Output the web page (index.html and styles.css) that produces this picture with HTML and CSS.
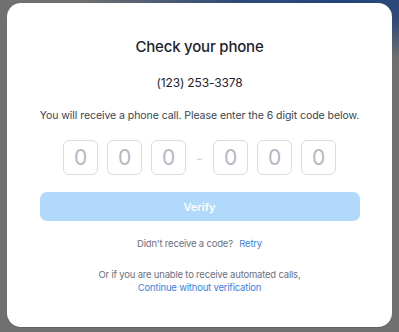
FILE: index.html
```html
<!DOCTYPE html>
<html>
<head>
<meta charset="utf-8">
<link rel="stylesheet" href="styles.css">
</head>
<body>
<div class="card">
  <h1 class="title">Check your phone</h1>
  <p class="phone">(123) 253-3378</p>
  <p class="desc">You will receive a phone call. Please enter the 6 digit code below.</p>
  <div class="code">
    <div class="box">0</div>
    <div class="box">0</div>
    <div class="box">0</div>
    <div class="dash">-</div>
    <div class="box">0</div>
    <div class="box">0</div>
    <div class="box">0</div>
  </div>
  <button class="verify">Verify</button>
  <p class="retry">Didn't receive a code? <a class="link">Retry</a></p>
  <p class="alt">Or if you are unable to receive automated calls,<br><a class="link">Continue without verification</a></p>
</div>
</body>
</html>
```
FILE: styles.css
```css
html, body {
  margin: 0;
  height: 100%;
}
body {
  background: radial-gradient(ellipse 260px 60px at 340px 0, #23457c 0%, #2f4a78 40%, rgba(112,112,112,0) 100%), #707070;
  padding: 3px 7px 5px 7px;
  box-sizing: border-box;
  font-family: "Inter", "Liberation Sans", sans-serif;
}
.card {
  background: #fff;
  border-radius: 14px;
  height: 324px;
  box-sizing: border-box;
  padding-top: 34px;
  display: flex;
  flex-direction: column;
  align-items: center;
  box-shadow: 0 1px 1px rgba(0,0,0,0.15);
}
.title {
  margin: 0;
  font-size: 15px;
  line-height: 20px;
  letter-spacing: -0.2px;
  font-weight: 500;
  color: #1b1f2e;
}
.phone {
  margin: 18px 0 0;
  font-size: 12px;
  line-height: 16px;
  letter-spacing: -0.15px;
  color: #1f2330;
}
.desc {
  margin: 18px 0 0;
  font-size: 10.5px;
  line-height: 14px;
  letter-spacing: -0.06px;
  color: #3a3f4c;
}
.code {
  margin-top: 17px;
  display: flex;
  align-items: center;
  gap: 9px;
}
.box {
  width: 35px;
  height: 35px;
  box-sizing: border-box;
  border: 1px solid #d9dce3;
  border-radius: 6px;
  display: flex;
  align-items: center;
  justify-content: center;
  font-size: 21px;
  color: #b3b7c4;
}
.dash {
  width: 9px;
  text-align: center;
  font-size: 16px;
  color: #d3d6dd;
}
.verify {
  margin-top: 17px;
  width: 320px;
  height: 29px;
  border: 0;
  border-radius: 7px;
  background: #b0d9fc;
  color: #fff;
  font-family: inherit;
  font-size: 11px;
  font-weight: 600;
}
.retry {
  margin: 16px 0 0;
  font-size: 9.5px;
  line-height: 14px;
  letter-spacing: -0.2px;
  color: #6b7080;
}
.retry .link {
  margin-left: 4px;
}
.alt {
  margin: 17px 0 0;
  font-size: 9.5px;
  line-height: 13px;
  letter-spacing: -0.2px;
  color: #6b7080;
  text-align: center;
}
.link {
  color: #3d7fe0;
}
```
